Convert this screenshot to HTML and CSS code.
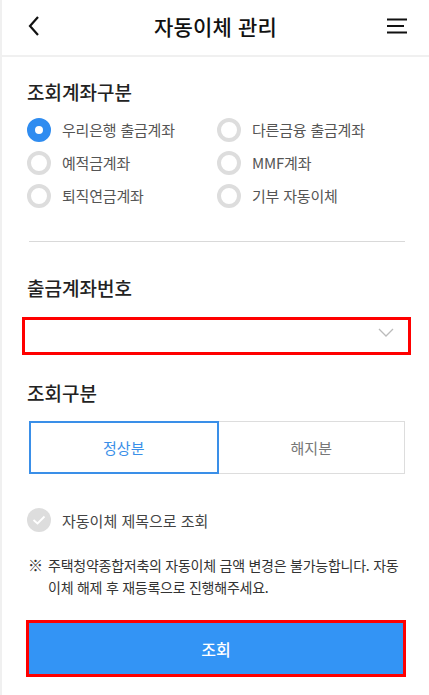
FILE: index.html
```html
<!DOCTYPE html>
<html lang="ko">
<head>
<meta charset="utf-8">
<link rel="stylesheet" href="styles.css">
</head>
<body>
<div class="page">
  <header class="header">
    <svg class="back" width="14" height="22" viewBox="0 0 14 22"><path d="M11 2 L3 11 L11 20" fill="none" stroke="#111" stroke-width="2.2"/></svg>
    <h1 class="title">자동이체 관리</h1>
    <svg class="menu" width="22" height="18" viewBox="0 0 22 18"><path d="M1 2.5H21M1 9H18M1 15.5H21" stroke="#111" stroke-width="2.2"/></svg>
  </header>
  <main class="content">
    <h2 class="label first">조회계좌구분</h2>
    <div class="radios">
      <div class="radio on"><span class="dot"></span>우리은행 출금계좌</div>
      <div class="radio"><span class="dot"></span>다른금융 출금계좌</div>
      <div class="radio"><span class="dot"></span>예적금계좌</div>
      <div class="radio"><span class="dot"></span>MMF계좌</div>
      <div class="radio"><span class="dot"></span>퇴직연금계좌</div>
      <div class="radio"><span class="dot"></span>기부 자동이체</div>
    </div>
    <hr class="divider">
    <h2 class="label second">출금계좌번호</h2>
    <div class="select">
      <svg width="16" height="9" viewBox="0 0 16 9"><path d="M1 1 L8 8 L15 1" fill="none" stroke="#bbb" stroke-width="1.3"/></svg>
    </div>
    <h2 class="label third">조회구분</h2>
    <div class="toggle">
      <div class="opt on">정상분</div>
      <div class="opt">해지분</div>
    </div>
    <div class="check">
      <span class="cbox"><svg width="14" height="10" viewBox="0 0 14 10"><path d="M1.5 5 L5.5 8.5 L12.5 1.5" fill="none" stroke="#fff" stroke-width="1.8"/></svg></span>
      자동이체 제목으로 조회
    </div>
    <p class="note"><span class="mark">※</span><span class="note-text">주택청약종합저축의 자동이체 금액 변경은 불가능합니다. 자동이체 해제 후 재등록으로 진행해주세요.</span></p>
    <div class="btn-wrap"><button class="btn">조회</button></div>
  </main>
</div>
</body>
</html>
```
FILE: styles.css
```css
* { box-sizing: border-box; margin: 0; padding: 0; }
html, body { width: 429px; height: 695px; background: #fff; overflow: hidden; }
body { font-family: "Noto Sans CJK KR", "Noto Sans", sans-serif; color: #222; }
.page { border-left: 2px solid #f0f0f0; min-height: 695px; }
.header {
  height: 57px;
  display: flex;
  align-items: center;
  justify-content: space-between;
  padding: 0 21px 4px 25px;
  border-bottom: 2px solid #f0f0f0;
}
.back { display: block; }
.title { font-size: 21px; font-weight: 500; color: #111; letter-spacing: 0.2px; margin-left: 4px; }
.menu { display: block; }
.content { padding: 0 24px 0 25px; }
.label { font-size: 19px; font-weight: 500; color: #222; line-height: 28px; }
.label.first { margin-top: 21px; }
.radios {
  display: grid;
  grid-template-columns: 190px 1fr;
  row-gap: 8px;
  margin-top: 11px;
}
.radio {
  display: flex;
  align-items: center;
  gap: 11px;
  font-size: 15px;
  color: #555;
  height: 25px;
  letter-spacing: -0.2px;
}
.dot {
  width: 24px; height: 24px;
  border-radius: 50%;
  border: 4px solid #ddd;
  background: #fff;
  flex: none;
}
.radio.on .dot { border: 8px solid #2f8cf0; background: #fff; }
.divider { border: 0; border-top: 1px solid #d9d9d9; margin: 33px 0 0 2px; }
.label.second { margin-top: 32px; }
.select {
  margin: 15px -6px 0 -5px;
  height: 38px;
  border: 3px solid #ff0000;
  display: flex;
  justify-content: flex-end;
  align-items: flex-start;
  padding: 8px 14px 0 0;
}
.label.third { margin-top: 24px; }
.toggle {
  display: flex;
  margin: 14px 0 0 2px;
  height: 53px;
}
.opt {
  flex: 1;
  display: flex;
  align-items: center;
  justify-content: center;
  font-size: 15px;
  color: #777;
  border: 1px solid #ddd;
  border-left: 0;
}
.opt.on { color: #3a8fe8; border: 2px solid #3a8fe8; }
.check {
  display: flex;
  align-items: center;
  gap: 11px;
  font-size: 15px;
  color: #444;
  margin-top: 34px;
}
.cbox {
  width: 24px; height: 24px;
  border-radius: 50%;
  background: #ddd;
  display: flex;
  align-items: center;
  justify-content: center;
}
.note {
  display: flex;
  gap: 5px;
  font-size: 14px;
  line-height: 22px;
  color: #333;
  margin-top: 22px;
  padding-left: 1px;
}
.mark { flex: none; font-size: 15px; }
.note-text { word-break: break-all; letter-spacing: -0.25px; }
.btn-wrap { margin: 22px -1px 0 -1px; border: 3px solid #ff0000; }
.btn {
  display: block;
  width: 100%;
  height: 51px;
  border: 0;
  background: #3394f5;
  color: #fff;
  font-family: inherit;
  font-size: 16px;
  font-weight: 500;
}
```
